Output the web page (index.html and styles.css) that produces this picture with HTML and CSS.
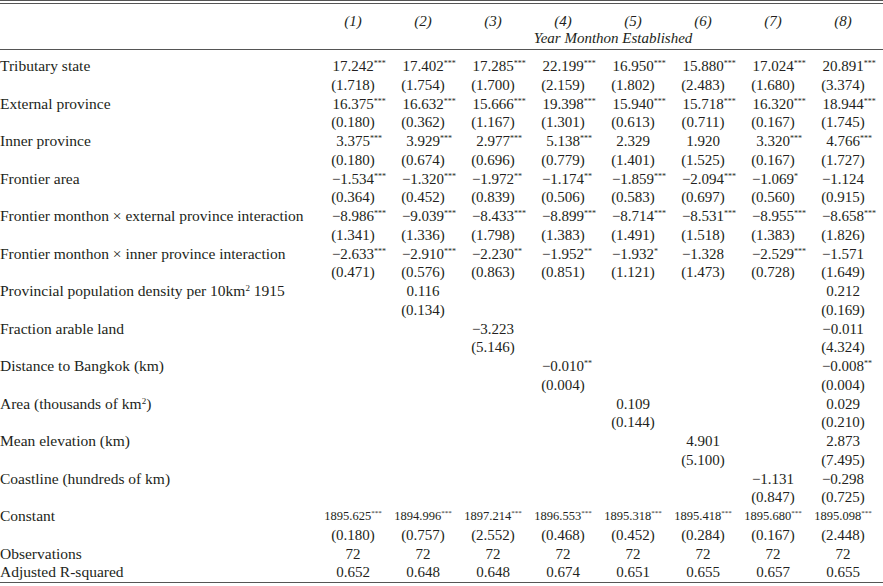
FILE: index.html
```html
<!DOCTYPE html>
<html>
<head>
<meta charset="utf-8">
<link rel="stylesheet" href="styles.css">
</head>
<body>
<div class="table">
  <div class="rule-double"></div>
  <div class="row head">
    <div class="label"></div>
    <div class="c">(1)</div><div class="c">(2)</div><div class="c">(3)</div><div class="c">(4)</div>
    <div class="c">(5)</div><div class="c">(6)</div><div class="c">(7)</div><div class="c">(8)</div>
  </div>
  <div class="row head2">
    <div class="label"></div>
    <div class="span">Year Monthon Established</div>
  </div>
  <div class="rule-mid"></div>
  <div class="body">
    <div class="row"><div class="label">Tributary state</div>
      <div class="c">17.242<span class="s">***</span></div><div class="c">17.402<span class="s">***</span></div><div class="c">17.285<span class="s">***</span></div><div class="c">22.199<span class="s">***</span></div><div class="c">16.950<span class="s">***</span></div><div class="c">15.880<span class="s">***</span></div><div class="c">17.024<span class="s">***</span></div><div class="c">20.891<span class="s">***</span></div></div>
    <div class="row"><div class="label"></div>
      <div class="c">(1.718)</div><div class="c">(1.754)</div><div class="c">(1.700)</div><div class="c">(2.159)</div><div class="c">(1.802)</div><div class="c">(2.483)</div><div class="c">(1.680)</div><div class="c">(3.374)</div></div>

    <div class="row"><div class="label">External province</div>
      <div class="c">16.375<span class="s">***</span></div><div class="c">16.632<span class="s">***</span></div><div class="c">15.666<span class="s">***</span></div><div class="c">19.398<span class="s">***</span></div><div class="c">15.940<span class="s">***</span></div><div class="c">15.718<span class="s">***</span></div><div class="c">16.320<span class="s">***</span></div><div class="c">18.944<span class="s">***</span></div></div>
    <div class="row"><div class="label"></div>
      <div class="c">(0.180)</div><div class="c">(0.362)</div><div class="c">(1.167)</div><div class="c">(1.301)</div><div class="c">(0.613)</div><div class="c">(0.711)</div><div class="c">(0.167)</div><div class="c">(1.745)</div></div>

    <div class="row"><div class="label">Inner province</div>
      <div class="c">3.375<span class="s">***</span></div><div class="c">3.929<span class="s">***</span></div><div class="c">2.977<span class="s">***</span></div><div class="c">5.138<span class="s">***</span></div><div class="c">2.329</div><div class="c">1.920</div><div class="c">3.320<span class="s">***</span></div><div class="c">4.766<span class="s">***</span></div></div>
    <div class="row"><div class="label"></div>
      <div class="c">(0.180)</div><div class="c">(0.674)</div><div class="c">(0.696)</div><div class="c">(0.779)</div><div class="c">(1.401)</div><div class="c">(1.525)</div><div class="c">(0.167)</div><div class="c">(1.727)</div></div>

    <div class="row"><div class="label">Frontier area</div>
      <div class="c">−1.534<span class="s">***</span></div><div class="c">−1.320<span class="s">***</span></div><div class="c">−1.972<span class="s">**</span></div><div class="c">−1.174<span class="s">**</span></div><div class="c">−1.859<span class="s">***</span></div><div class="c">−2.094<span class="s">***</span></div><div class="c">−1.069<span class="s">*</span></div><div class="c">−1.124</div></div>
    <div class="row"><div class="label"></div>
      <div class="c">(0.364)</div><div class="c">(0.452)</div><div class="c">(0.839)</div><div class="c">(0.506)</div><div class="c">(0.583)</div><div class="c">(0.697)</div><div class="c">(0.560)</div><div class="c">(0.915)</div></div>

    <div class="row"><div class="label">Frontier monthon × external province interaction</div>
      <div class="c">−8.986<span class="s">***</span></div><div class="c">−9.039<span class="s">***</span></div><div class="c">−8.433<span class="s">***</span></div><div class="c">−8.899<span class="s">***</span></div><div class="c">−8.714<span class="s">***</span></div><div class="c">−8.531<span class="s">***</span></div><div class="c">−8.955<span class="s">***</span></div><div class="c">−8.658<span class="s">***</span></div></div>
    <div class="row"><div class="label"></div>
      <div class="c">(1.341)</div><div class="c">(1.336)</div><div class="c">(1.798)</div><div class="c">(1.383)</div><div class="c">(1.491)</div><div class="c">(1.518)</div><div class="c">(1.383)</div><div class="c">(1.826)</div></div>

    <div class="row"><div class="label">Frontier monthon × inner province interaction</div>
      <div class="c">−2.633<span class="s">***</span></div><div class="c">−2.910<span class="s">***</span></div><div class="c">−2.230<span class="s">**</span></div><div class="c">−1.952<span class="s">**</span></div><div class="c">−1.932<span class="s">*</span></div><div class="c">−1.328</div><div class="c">−2.529<span class="s">***</span></div><div class="c">−1.571</div></div>
    <div class="row"><div class="label"></div>
      <div class="c">(0.471)</div><div class="c">(0.576)</div><div class="c">(0.863)</div><div class="c">(0.851)</div><div class="c">(1.121)</div><div class="c">(1.473)</div><div class="c">(0.728)</div><div class="c">(1.649)</div></div>

    <div class="row"><div class="label">Provincial population density per 10km<sup>2</sup> 1915</div>
      <div class="c"></div><div class="c">0.116</div><div class="c"></div><div class="c"></div><div class="c"></div><div class="c"></div><div class="c"></div><div class="c">0.212</div></div>
    <div class="row"><div class="label"></div>
      <div class="c"></div><div class="c">(0.134)</div><div class="c"></div><div class="c"></div><div class="c"></div><div class="c"></div><div class="c"></div><div class="c">(0.169)</div></div>

    <div class="row"><div class="label">Fraction arable land</div>
      <div class="c"></div><div class="c"></div><div class="c">−3.223</div><div class="c"></div><div class="c"></div><div class="c"></div><div class="c"></div><div class="c">−0.011</div></div>
    <div class="row"><div class="label"></div>
      <div class="c"></div><div class="c"></div><div class="c">(5.146)</div><div class="c"></div><div class="c"></div><div class="c"></div><div class="c"></div><div class="c">(4.324)</div></div>

    <div class="row"><div class="label">Distance to Bangkok (km)</div>
      <div class="c"></div><div class="c"></div><div class="c"></div><div class="c">−0.010<span class="s">**</span></div><div class="c"></div><div class="c"></div><div class="c"></div><div class="c">−0.008<span class="s">**</span></div></div>
    <div class="row"><div class="label"></div>
      <div class="c"></div><div class="c"></div><div class="c"></div><div class="c">(0.004)</div><div class="c"></div><div class="c"></div><div class="c"></div><div class="c">(0.004)</div></div>

    <div class="row"><div class="label">Area (thousands of km<sup>2</sup>)</div>
      <div class="c"></div><div class="c"></div><div class="c"></div><div class="c"></div><div class="c">0.109</div><div class="c"></div><div class="c"></div><div class="c">0.029</div></div>
    <div class="row"><div class="label"></div>
      <div class="c"></div><div class="c"></div><div class="c"></div><div class="c"></div><div class="c">(0.144)</div><div class="c"></div><div class="c"></div><div class="c">(0.210)</div></div>

    <div class="row"><div class="label">Mean elevation (km)</div>
      <div class="c"></div><div class="c"></div><div class="c"></div><div class="c"></div><div class="c"></div><div class="c">4.901</div><div class="c"></div><div class="c">2.873</div></div>
    <div class="row"><div class="label"></div>
      <div class="c"></div><div class="c"></div><div class="c"></div><div class="c"></div><div class="c"></div><div class="c">(5.100)</div><div class="c"></div><div class="c">(7.495)</div></div>

    <div class="row"><div class="label">Coastline (hundreds of km)</div>
      <div class="c"></div><div class="c"></div><div class="c"></div><div class="c"></div><div class="c"></div><div class="c"></div><div class="c">−1.131</div><div class="c">−0.298</div></div>
    <div class="row"><div class="label"></div>
      <div class="c"></div><div class="c"></div><div class="c"></div><div class="c"></div><div class="c"></div><div class="c"></div><div class="c">(0.847)</div><div class="c">(0.725)</div></div>

    <div class="row const"><div class="label">Constant</div>
      <div class="c">1895.625<span class="si">***</span></div><div class="c">1894.996<span class="si">***</span></div><div class="c">1897.214<span class="si">***</span></div><div class="c">1896.553<span class="si">***</span></div><div class="c">1895.318<span class="si">***</span></div><div class="c">1895.418<span class="si">***</span></div><div class="c">1895.680<span class="si">***</span></div><div class="c">1895.098<span class="si">***</span></div></div>
    <div class="row"><div class="label"></div>
      <div class="c">(0.180)</div><div class="c">(0.757)</div><div class="c">(2.552)</div><div class="c">(0.468)</div><div class="c">(0.452)</div><div class="c">(0.284)</div><div class="c">(0.167)</div><div class="c">(2.448)</div></div>

    <div class="row"><div class="label">Observations</div>
      <div class="c">72</div><div class="c">72</div><div class="c">72</div><div class="c">72</div><div class="c">72</div><div class="c">72</div><div class="c">72</div><div class="c">72</div></div>
    <div class="row"><div class="label">Adjusted R-squared</div>
      <div class="c">0.652</div><div class="c">0.648</div><div class="c">0.648</div><div class="c">0.674</div><div class="c">0.651</div><div class="c">0.655</div><div class="c">0.657</div><div class="c">0.655</div></div>
  </div>
  <div class="rule-bottom"></div>
</div>
</body>
</html>
```

FILE: styles.css
```css
html, body {
  margin: 0;
  padding: 0;
  background: #ffffff;
}

body {
  font-family: "Liberation Serif", "DejaVu Serif", serif;
  font-size: 15px;
  color: #231f20;
}

.table {
  width: 883px;
}

.rule-double {
  height: 2px;
  border-top: 1.5px solid #555555;
  border-bottom: 1.5px solid #555555;
}

.rule-mid {
  margin-top: 2px;
  border-top: 1.5px solid #555555;
}

.rule-bottom {
  border-top: 1.5px solid #555555;
}

.row {
  display: grid;
  grid-template-columns: 318px repeat(8, 70px);
  height: 18.75px;
  line-height: 18.75px;
  white-space: nowrap;
}

.head {
  margin-top: 8px;
  height: 18px;
  line-height: 18px;
  font-style: italic;
}

.head2 {
  height: 17px;
  line-height: 17px;
  font-style: italic;
}

.head2 .span {
  grid-column: 2 / span 8;
  text-align: center;
  padding-left: 30px;
}

.body {
  padding-top: 7px;
}

.label {
  text-align: left;
  font-size: 15.5px;
}

.label sup {
  font-size: 9px;
  line-height: 0;
  vertical-align: 5px;
}

.c {
  text-align: center;
}

.s {
  display: inline-block;
  width: 0;
  font-size: 8px;
  line-height: 8px;
  vertical-align: 5px;
  white-space: nowrap;
}

.const .c {
  font-size: 12.5px;
}

.si {
  font-size: 7px;
  line-height: 0;
  vertical-align: 5px;
}
```
